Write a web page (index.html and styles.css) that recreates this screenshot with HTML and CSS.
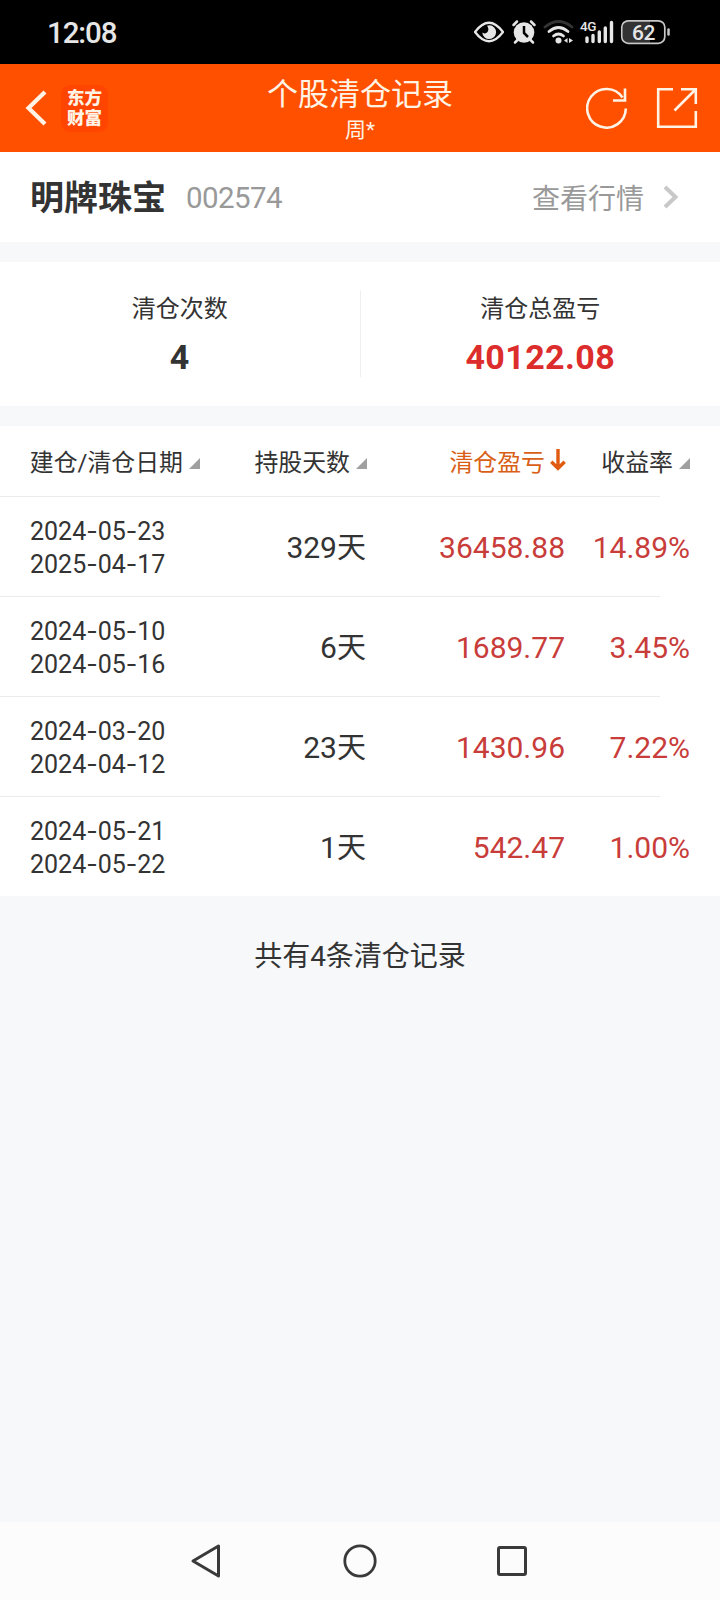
FILE: index.html
```html
<!DOCTYPE html>
<html lang="zh-CN">
<head>
    <meta charset="UTF-8">
    <meta name="viewport" content="width=device-width, initial-scale=1.0">
    <title>个股清仓记录</title>
    <link rel="stylesheet" href="styles.css">
</head>
<body>
    <div class="status">
        <span class="time">12:08</span>
        <svg class="status-icons" width="200" height="28" viewBox="0 0 200 28">
            <!-- eye -->
            <path d="M5 14Q19 -4.500 33 14Q19 32.500 5 14Z" fill="none" stroke="#e6e6e6" stroke-width="2.300" stroke-linejoin="round"/>
            <path d="M19.500 7.300A6.900 6.900 0 1 1 12.300 14.500Q15.500 16.500 17.500 14Q19.500 11 17 7.800Z" fill="#e6e6e6"/>
            <!-- alarm -->
            <circle cx="54" cy="14.500" r="10.300" fill="#e6e6e6"/>
            <path d="M43.500 7L47 3.500M64.500 7L61 3.500M47.500 22L45 24.500M60.500 22L63 24.500" stroke="#e6e6e6" stroke-width="2.500" stroke-linecap="round"/>
            <path d="M54 8V15L58 19" fill="none" stroke="#000" stroke-width="2.500"/>
            <!-- wifi -->
            <path d="M75 9Q88.500 -2 102 9" fill="none" stroke="#333" stroke-width="2.800" stroke-linecap="round"/>
            <path d="M79 13.500Q88.500 5.500 98 13.500M83.500 18Q88.500 14 93.500 18" fill="none" stroke="#e6e6e6" stroke-width="2.800" stroke-linecap="round"/>
            <circle cx="88.500" cy="22.500" r="3" fill="#e6e6e6"/>
            <path d="M97.500 20V25L94 22.500ZM99 20V25L103 22.500Z" fill="#e6e6e6"/>
            <!-- signal -->
            <text x="110" y="12.500" class="net">4G</text>
            <path d="M117 20V23.500M123 17.500V23.500M129.300 14V23.500M135.300 10V23.500M141.500 4.500V23.500" stroke="#e6e6e6" stroke-width="3.400" stroke-linecap="round"/>
            <!-- battery -->
            <path d="M158 3.500H180V24.500H158Q153 24.500 153 19V9Q153 3.500 158 3.500Z" fill="#333"/>
            <rect x="151.800" y="2.800" width="43" height="22.500" rx="6.500" fill="none" stroke="#c8c8c8" stroke-width="1.700"/>
            <text x="173.500" y="21.500" class="level">62</text>
            <path d="M198.500 11.500V16.500" stroke="#c8c8c8" stroke-width="2.500" stroke-linecap="round"/>
        </svg>
    </div>

    <header class="topbar">
        <div class="left">
            <svg width="22" height="36" viewBox="0 0 22 36"><path d="M20 2L3.500 18L20 34" fill="none" stroke="#fff3e6" stroke-width="4.200"/></svg>
            <div class="logo">东方<br>财富</div>
        </div>
        <div class="title">
            <h1>个股清仓记录</h1>
            <p>周*</p>
        </div>
        <div class="right">
            <svg width="42" height="42" viewBox="0 0 42 42" fill="none" stroke="#fff3e6" stroke-width="2.600"><path d="M39.800 21.500A19.300 19.300 0 1 1 36.500 10.500M39 1.500V13.500H27"/></svg>
            <svg width="42" height="42" viewBox="0 0 42 42" fill="none" stroke="#fff3e6" stroke-width="2.600"><path d="M17 2.200H2.200V39.800H39.800V24M25 2.200H39.800V17M39.500 2.500L18.500 23.500"/></svg>
        </div>
    </header>

    <section class="stock">
        <b>明牌珠宝</b>
        <span class="code">002574</span>
        <span class="more">查看行情</span>
        <svg width="16" height="24" viewBox="0 0 16 24"><path d="M2 2L12.500 12L2 22" fill="none" stroke="#c8c8c8" stroke-width="4"/></svg>
    </section>

    <section class="stats">
        <div class="stat">
            <p>清仓次数</p>
            <strong>4</strong>
        </div>
        <div class="stat">
            <p>清仓总盈亏</p>
            <strong class="red">40122.08</strong>
        </div>
    </section>

    <section class="table">
        <div class="row head">
            <div>建仓/清仓日期<i class="tri"></i></div>
            <div class="mid">持股天数<i class="tri"></i></div>
            <div class="mid active">清仓盈亏<svg width="18" height="24" viewBox="0 0 18 24"><path d="M9 0V19M2.300 12.800L9 19.300L15.700 12.800" fill="none" stroke="#e05a10" stroke-width="3.400"/></svg></div>
            <div>收益率<i class="tri"></i></div>
        </div>
        <div class="row">
            <div class="date">2024<s>-</s>05<s>-</s>23<br>2025<s>-</s>04<s>-</s>17</div>
            <div class="days">329<span>天</span></div>
            <div class="red">36458.88</div>
            <div class="red">14.89%</div>
        </div>
        <div class="row">
            <div class="date">2024<s>-</s>05<s>-</s>10<br>2024<s>-</s>05<s>-</s>16</div>
            <div class="days">6<span>天</span></div>
            <div class="red">1689.77</div>
            <div class="red">3.45%</div>
        </div>
        <div class="row">
            <div class="date">2024<s>-</s>03<s>-</s>20<br>2024<s>-</s>04<s>-</s>12</div>
            <div class="days">23<span>天</span></div>
            <div class="red">1430.96</div>
            <div class="red">7.22%</div>
        </div>
        <div class="row">
            <div class="date">2024<s>-</s>05<s>-</s>21<br>2024<s>-</s>05<s>-</s>22</div>
            <div class="days">1<span>天</span></div>
            <div class="red">542.47</div>
            <div class="red">1.00%</div>
        </div>
    </section>

    <p class="total">共有4条清仓记录</p>

    <nav class="nav">
        <svg width="34" height="38" viewBox="0 0 34 38"><path d="M29.500 4V34L4 19Z" fill="none" stroke="#3a3a3a" stroke-width="3" stroke-linejoin="round"/></svg>
        <svg width="36" height="38" viewBox="0 0 36 38"><circle cx="19" cy="19" r="15.200" fill="none" stroke="#3a3a3a" stroke-width="2.800"/></svg>
        <svg width="34" height="38" viewBox="0 0 34 38"><rect x="3.500" y="5.500" width="27" height="27" rx="1.500" fill="none" stroke="#3a3a3a" stroke-width="3"/></svg>
    </nav>
</body>
</html>
```
FILE: styles.css
```css
* { box-sizing: border-box; margin: 0; padding: 0; }
body { width: 720px; height: 1600px; display: flex; flex-direction: column; background: #f6f8fa; color: #333; font-family: Roboto, "Noto Sans CJK SC", sans-serif; overflow: hidden; }
svg { display: block; flex: none; }

.status { height: 64px; padding: 0 50px 0 47px; display: flex; align-items: center; justify-content: space-between; background: #000; color: #e6e6e6; }
.time { font-size: 29.500px; font-weight: 500; letter-spacing: -1.1px; padding-top: 1px; }
.net { font-size: 13.500px; font-weight: 500; fill: #e6e6e6; letter-spacing: -0.5px; }
.level { font-size: 21px; font-weight: 500; fill: #e6e6e6; text-anchor: middle; letter-spacing: -0.5px; }

.topbar { height: 88px; padding: 0 22px 0 25px; display: grid; grid-template-columns: 1fr 200px 1fr; background: #ff5000; color: #fff3e6; }
.left { display: flex; align-items: center; gap: 14px; }
.logo { width: 47px; height: 47px; border-radius: 9px; background: #ff4500; font-size: 17.500px; font-weight: 900; line-height: 20px; padding-top: 3px; text-align: center; }
.title { text-align: center; padding-top: 10px; margin: 0 0 0 -3px; }
.title h1 { font-size: 31px; font-weight: 400; line-height: 41px; }
.title p { font-size: 21px; line-height: 30px; }
.right { display: flex; align-items: center; justify-content: flex-end; gap: 28px; }

.stock { height: 90px; padding: 0 41px 0 30px; display: flex; align-items: center; background: #fff; }
.stock b { font-size: 34px; padding-bottom: 3px; }
.code { flex: 1; margin-left: 20px; padding-top: 2px; font-size: 29.500px; letter-spacing: -0.6px; color: #999; }
.more { font-size: 28px; color: #999; margin: 0 19px 1px 0; }

.stats { height: 144px; margin: 20px 0; padding: 29px 0; display: flex; background: #fff; }
.stat { flex: 1; text-align: center; }
.stat + .stat { border-left: 1px solid #eee; }
.stat p { font-size: 24px; line-height: 36px; }
.stat strong { display: block; font-size: 34px; line-height: 40px; margin-top: 10px; letter-spacing: 0.4px; }

.table { background: #fff; }
.row { height: 100px; padding: 0 30px; display: grid; grid-template-columns: 170px 165px 200px 125px; align-items: center; text-align: right; font-size: 30px; background: linear-gradient(#ebebeb, #ebebeb) no-repeat 0 0 / 660px 1px; }
.row.head { height: 70px; padding-bottom: 1px; font-size: 23.900px; background: none; }
.head div { display: flex; align-items: center; justify-content: flex-end; white-space: nowrap; }
.head .mid { margin-right: -2px; }
.tri { border-left: 11px solid transparent; border-bottom: 11px solid #a0a0a0; margin: 5px 0 0 6px; }
.head svg { margin-left: 4px; }
.active { color: #d95f17; }
.date { text-align: left; font-size: 25px; line-height: 33px; padding-top: 3px; }
/* wide dash between date parts */
.date s { font-family: Inter, sans-serif; text-decoration: none; }
.days { line-height: 42px; padding-top: 4px; margin-right: -1px; }
.days span { font-size: 29px; }
.row .red { color: #c83c3a; padding-top: 3px; }
.stat .red { color: #dc2c2c; }

.total { margin-top: 40px; text-align: center; font-size: 28px; line-height: 42px; }
.nav { height: 78px; margin-top: auto; padding: 0 191px 0 189px; display: flex; align-items: center; justify-content: space-between; background: #fcfcfc; }
```
